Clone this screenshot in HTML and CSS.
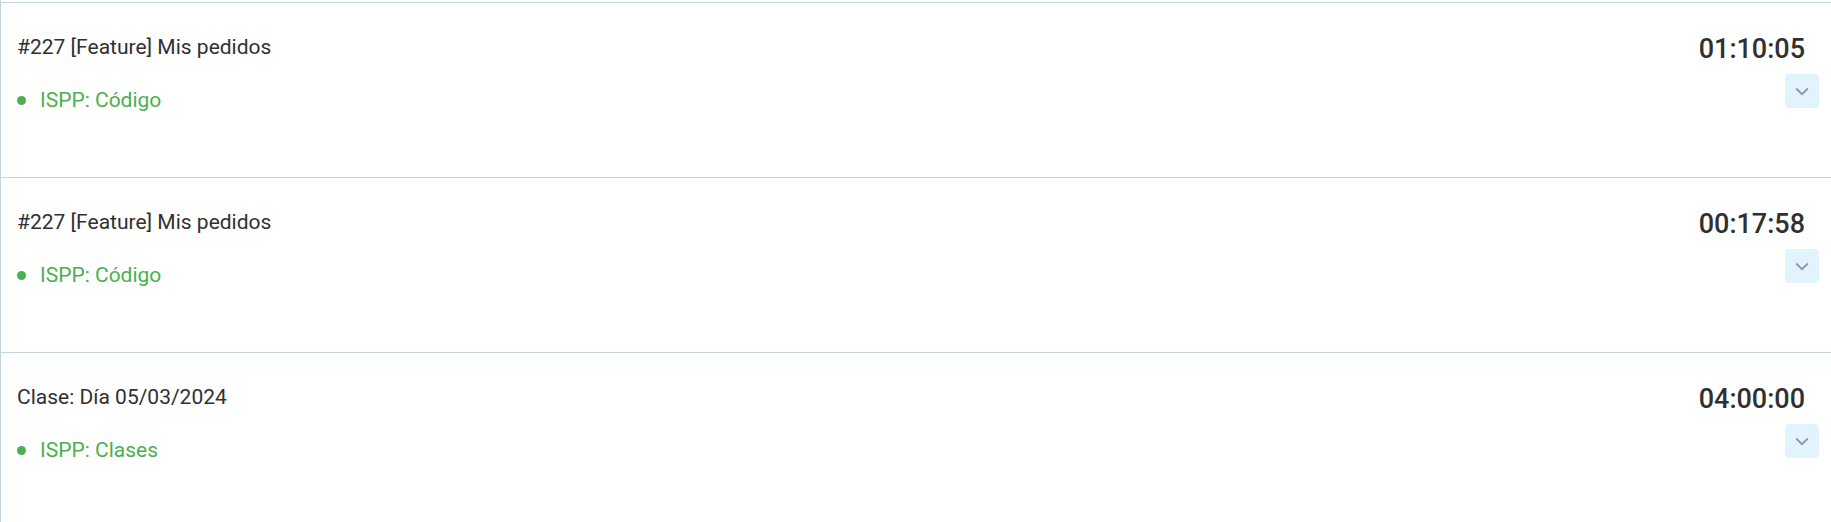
FILE: index.html
```html
<!DOCTYPE html>
<html lang="es">
<head>
<meta charset="utf-8">
<title>Entradas</title>
<link rel="stylesheet" href="styles.css">
</head>
<body>
<div class="list">
  <div class="entry">
    <div class="info">
      <div class="title">#227 [Feature] Mis pedidos</div>
      <div class="project"><span class="dot"></span>ISPP: Código</div>
    </div>
    <div class="side">
      <div class="time">01:10:05</div>
      <button class="toggle" type="button" aria-label="Expandir">
        <svg width="14" height="9" viewBox="0 0 14 9"><path d="M1.2 1.5 L7 7.2 L12.8 1.5" fill="none" stroke="#8d99a1" stroke-width="1.8"/></svg>
      </button>
    </div>
  </div>
  <div class="entry">
    <div class="info">
      <div class="title">#227 [Feature] Mis pedidos</div>
      <div class="project"><span class="dot"></span>ISPP: Código</div>
    </div>
    <div class="side">
      <div class="time">00:17:58</div>
      <button class="toggle" type="button" aria-label="Expandir">
        <svg width="14" height="9" viewBox="0 0 14 9"><path d="M1.2 1.5 L7 7.2 L12.8 1.5" fill="none" stroke="#8d99a1" stroke-width="1.8"/></svg>
      </button>
    </div>
  </div>
  <div class="entry">
    <div class="info">
      <div class="title">Clase: Día 05/03/2024</div>
      <div class="project"><span class="dot"></span>ISPP: Clases</div>
    </div>
    <div class="side">
      <div class="time">04:00:00</div>
      <button class="toggle" type="button" aria-label="Expandir">
        <svg width="14" height="9" viewBox="0 0 14 9"><path d="M1.2 1.5 L7 7.2 L12.8 1.5" fill="none" stroke="#8d99a1" stroke-width="1.8"/></svg>
      </button>
    </div>
  </div>
</div>
</body>
</html>
```
FILE: styles.css
```css
html, body {
  margin: 0;
  padding: 0;
  background: #ffffff;
  font-family: Roboto, "Liberation Sans", sans-serif;
}

.list {
  padding-top: 2px;
  border-left: 1px solid #c5d3dd;
  min-height: 520px;
}

.entry {
  box-sizing: border-box;
  display: flex;
  justify-content: space-between;
  height: 175px;
  padding: 30px 12px 0 16px;
  border-top: 1px solid #c5d3dd;
}

.info {
  padding-top: 2px;
}

.title {
  font-size: 21px;
  color: #303030;
}

.project {
  display: flex;
  align-items: center;
  margin-top: 29px;
  font-size: 21px;
  color: #4caf50;
}

.dot {
  width: 9px;
  height: 9px;
  border-radius: 50%;
  background: #4caf50;
  margin-right: 14px;
}

.side {
  display: flex;
  flex-direction: column;
  align-items: flex-end;
}

.time {
  font-size: 27px;
  font-weight: 500;
  color: #303030;
  margin-right: 14px;
}

.toggle {
  margin-top: 9px;
  width: 34px;
  height: 34px;
  padding: 0;
  border: 0;
  border-radius: 4px;
  background: #e1f3fd;
  display: flex;
  align-items: center;
  justify-content: center;
}
```
